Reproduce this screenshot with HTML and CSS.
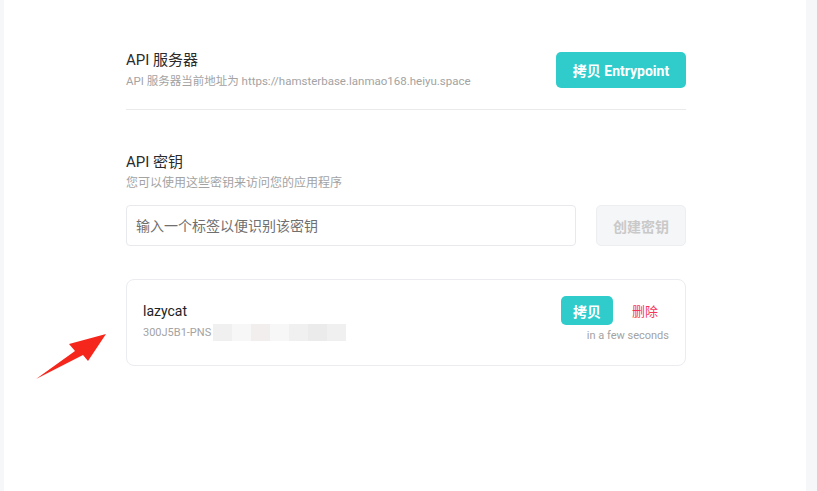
FILE: index.html
```html
<!DOCTYPE html>
<html lang="zh-CN">
<head>
    <meta charset="UTF-8">
    <title>API 设置</title>
    <link rel="stylesheet" href="styles.css">
</head>
<body>
    <div class="panel">
        <div class="content">
            <div class="section-row">
                <div>
                    <div class="section-title">API 服务器</div>
                    <div class="section-desc url">API 服务器当前地址为 https://hamsterbase.lanmao168.heiyu.space</div>
                </div>
                <button class="btn primary big">拷贝 Entrypoint</button>
            </div>

            <div class="divider"></div>

            <div class="section-title">API 密钥</div>
            <div class="section-desc">您可以使用这些密钥来访问您的应用程序</div>

            <div class="create-row">
                <input class="key-input" type="text" placeholder="输入一个标签以便识别该密钥">
                <button class="btn disabled">创建密钥</button>
            </div>

            <div class="key-card">
                <div>
                    <div class="key-name">lazycat</div>
                    <div class="key-value">300J5B1-PNS<span class="masked"><i></i><i></i><i></i><i></i><i></i><i></i><i></i></span></div>
                </div>
                <div class="key-side">
                    <div class="key-actions">
                        <button class="btn primary small">拷贝</button>
                        <span class="danger-link">删除</span>
                    </div>
                    <div class="key-time">in a few seconds</div>
                </div>
            </div>
        </div>

        <svg class="arrow" width="90" height="60" viewBox="0 0 90 60">
            <polygon points="6,52 45,24 39,17 76,7 58,34 53,28" fill="#f5271c"/>
        </svg>
    </div>
</body>
</html>
```

FILE: styles.css
```css
body {
    margin: 0;
    background: #f6f7f9;
    font-family: Roboto, "Noto Sans CJK SC", sans-serif;
    color: #333;
}
.panel {
    position: relative;
    margin: 0 11px 0 4px;
    height: 491px;
    background: #fff;
}
.content {
    width: 560px;
    margin-left: 122px;
    padding-top: 50px;
}
.section-row {
    display: flex;
    justify-content: space-between;
    align-items: flex-start;
}
.section-title {
    font-size: 15px;
    line-height: 20px;
    color: #2b2b2b;
}
.section-desc {
    font-size: 12px;
    line-height: 16px;
    margin-top: 3px;
    color: #a3a3a3;
}
.section-desc.url {
    font-size: 11.5px;
}
.btn {
    border: none;
    border-radius: 5px;
    font-family: Roboto, "Noto Sans CJK SC", sans-serif;
    font-weight: 700;
    cursor: pointer;
}
.btn.primary {
    background: #30cccb;
    color: #fff;
}
.btn.big {
    width: 130px;
    height: 36px;
    margin-top: 2px;
    font-size: 14px;
}
.btn.small {
    width: 52px;
    height: 29px;
    font-size: 14px;
}
.btn.disabled {
    width: 90px;
    height: 41px;
    background: #f5f6f8;
    border: 1px solid #eceef1;
    color: #c9c9c9;
    font-size: 14px;
}
.divider {
    height: 1px;
    background: #e9eaec;
    margin: 20px 0 42px;
}
.create-row {
    display: flex;
    justify-content: space-between;
    margin-top: 14px;
}
.key-input {
    width: 450px;
    height: 41px;
    box-sizing: border-box;
    border: 1px solid #e8e9ec;
    border-radius: 4px;
    padding: 0 9px;
    font-family: Roboto, "Noto Sans CJK SC", sans-serif;
    font-size: 14px;
    outline: none;
}
.key-input::placeholder {
    color: #6f6f6f;
}
.key-card {
    margin-top: 33px;
    height: 87px;
    box-sizing: border-box;
    border: 1px solid #ebecef;
    border-radius: 8px;
    padding: 16px 16px 0 16px;
    display: flex;
    justify-content: space-between;
}
.key-name {
    font-size: 14px;
    line-height: 20px;
    margin-top: 5px;
    color: #222;
}
.key-value {
    display: flex;
    align-items: center;
    font-size: 11px;
    line-height: 16px;
    margin-top: 3px;
    color: #a3a3a3;
}
.masked {
    display: flex;
    margin-left: 2px;
    height: 17px;
    background: #f7f7f7;
}
.masked i {
    width: 19px;
    height: 17px;
}
.masked i:nth-child(odd) { background: #f0f0f0; }
.masked i:nth-child(3) { background: #f3eeee; }
.masked i:nth-child(6) { background: #ebebeb; }
.key-side {
    display: flex;
    flex-direction: column;
    align-items: flex-end;
}
.key-actions {
    display: flex;
    align-items: center;
}
.danger-link {
    font-size: 13px;
    color: #f5365c;
    margin: 0 11px 0 19px;
}
.key-time {
    font-size: 11px;
    line-height: 16px;
    margin-top: 3px;
    color: #a3a3a3;
}
.arrow {
    position: absolute;
    left: 26px;
    top: 327px;
}
```
